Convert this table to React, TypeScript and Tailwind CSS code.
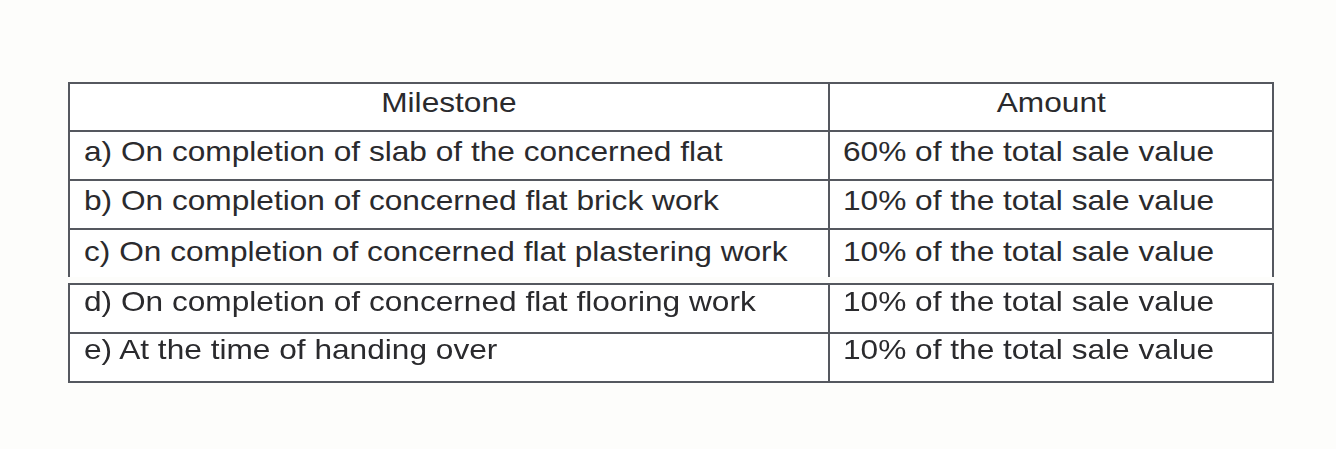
import React from "react"

type Row = { milestone: string; amount: string; pt: string }

const firstRows: Row[] = [
  { milestone: "a) On completion of slab of the concerned flat", amount: "60% of the total sale value", pt: "pt-[6px]" },
  { milestone: "b) On completion of concerned flat brick work", amount: "10% of the total sale value", pt: "pt-[6px]" },
  { milestone: "c) On completion of concerned flat plastering work", amount: "10% of the total sale value", pt: "pt-[8px]" },
]

const secondRows: Row[] = [
  { milestone: "d) On completion of concerned flat flooring work", amount: "10% of the total sale value", pt: "pt-[3px]" },
  { milestone: "e) At the time of handing over", amount: "10% of the total sale value", pt: "pt-[2px]" },
]

function Cell({ text, left, pt }: { text: string; left?: boolean; pt: string }) {
  return (
    <div
      className={`h-[47px] leading-[28px] ${pt} ${left ? "pl-[14px] border-r-2 border-[#55585f]" : "pl-[13px]"}`}
    >
      <span className="inline-block origin-left scale-x-[1.13] whitespace-nowrap">{text}</span>
    </div>
  )
}

export default function App() {
  return (
    <main
      className="min-h-[449px] bg-[#fdfdfb] pt-[82px] pl-[68px] text-[28px] text-[#2a2a2d]"
      style={{ fontFamily: '"Liberation Sans", Arial, sans-serif' }}
    >
      <div className="w-[1206px] blur-[0.4px]">
        {/* first block: header and rows a-c */}
        <div className="border-x-2 border-t-2 border-[#55585f] bg-white">
          <div className="grid grid-cols-[760px_1fr] border-b-2 border-[#55585f]">
            <div className="h-[46px] pt-[5px] leading-[28px] text-center border-r-2 border-[#55585f]">
              <span className="inline-block scale-x-[1.13]">Milestone</span>
            </div>
            <div className="h-[46px] pt-[5px] leading-[28px] text-center">
              <span className="inline-block scale-x-[1.13]">Amount</span>
            </div>
          </div>
          {firstRows.map((row, i) => (
            <div
              key={row.milestone}
              className={`grid grid-cols-[760px_1fr] ${i < firstRows.length - 1 ? "border-b-2 border-[#55585f]" : ""}`}
            >
              <Cell text={row.milestone} left pt={row.pt} />
              <Cell text={row.amount} pt={row.pt} />
            </div>
          ))}
        </div>

        {/* second block: rows d-e */}
        <div className="mt-[6px] border-2 border-[#55585f] bg-white">
          {secondRows.map((row, i) => (
            <div
              key={row.milestone}
              className={`grid grid-cols-[760px_1fr] ${i < secondRows.length - 1 ? "border-b-2 border-[#55585f]" : ""}`}
            >
              <Cell text={row.milestone} left pt={row.pt} />
              <Cell text={row.amount} pt={row.pt} />
            </div>
          ))}
        </div>
      </div>
    </main>
  )
}
